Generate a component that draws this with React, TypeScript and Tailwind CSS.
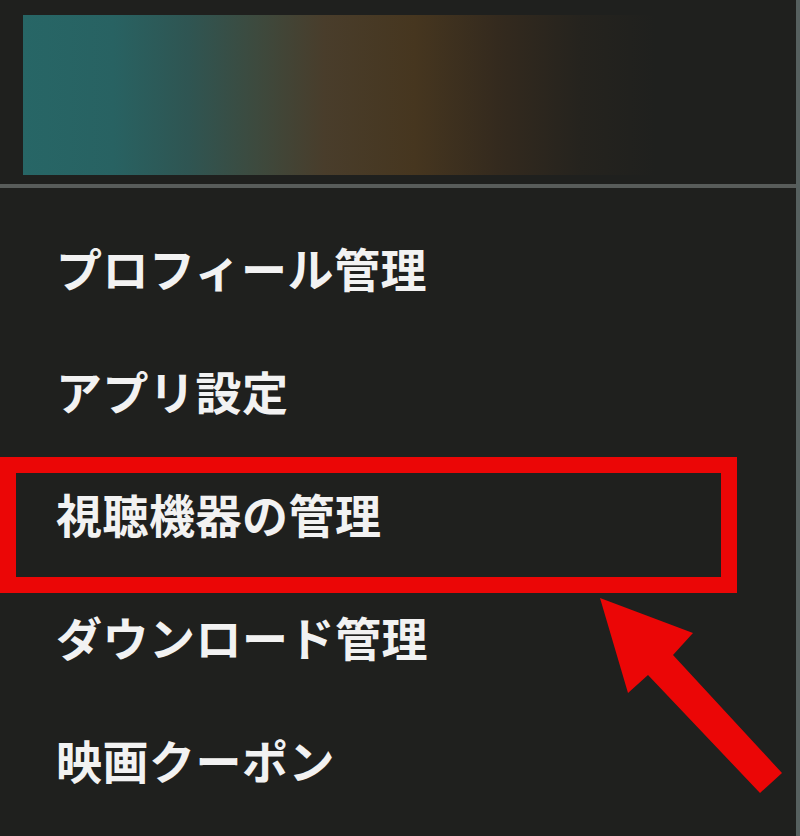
const items = [
  "プロフィール管理",
  "アプリ設定",
  "視聴機器の管理",
  "ダウンロード管理",
  "映画クーポン",
];

export default function App() {
  return (
    <div
      className="relative w-[800px] h-[836px] overflow-hidden bg-[#1f201e] border-r-[4px] border-[#56605f]"
      style={{ fontFamily: '"Noto Sans CJK JP", "Noto Sans", sans-serif' }}
    >
      <div className="pt-[15px] pl-[23px] pr-[20px]">
        <div className="h-[160px] w-full bg-[linear-gradient(90deg,#276666_0%,#286262_12%,#2f5552_22%,#3d4a3e_31%,#493d2b_40%,#46361f_52%,#342a1e_63%,#25231e_74%,#1f201e_84%)]" />
      </div>
      <div className="mt-[9px] h-[4px] bg-[#585c5a]" />
      <ul className="pt-[17px] flex flex-col">
        {items.map((label) => (
          <li
            key={label}
            className="h-[123px] flex items-center pl-[56px] text-[46px] leading-none font-bold text-[#f2f2f2] tracking-[0.5px]"
          >
            {label}
          </li>
        ))}
      </ul>

      {/* highlight */}
      <div className="absolute left-0 top-[457px] w-[737px] h-[136px] border-[16px] border-[#eb0606]" />
      <svg
        className="absolute left-0 top-0 pointer-events-none"
        width="800"
        height="836"
        viewBox="0 0 800 836"
      >
        <polygon
          points="600,598 693,633 673,655 782,773 760,793 648,675 628,693"
          fill="#eb0606"
        />
      </svg>
    </div>
  );
}
